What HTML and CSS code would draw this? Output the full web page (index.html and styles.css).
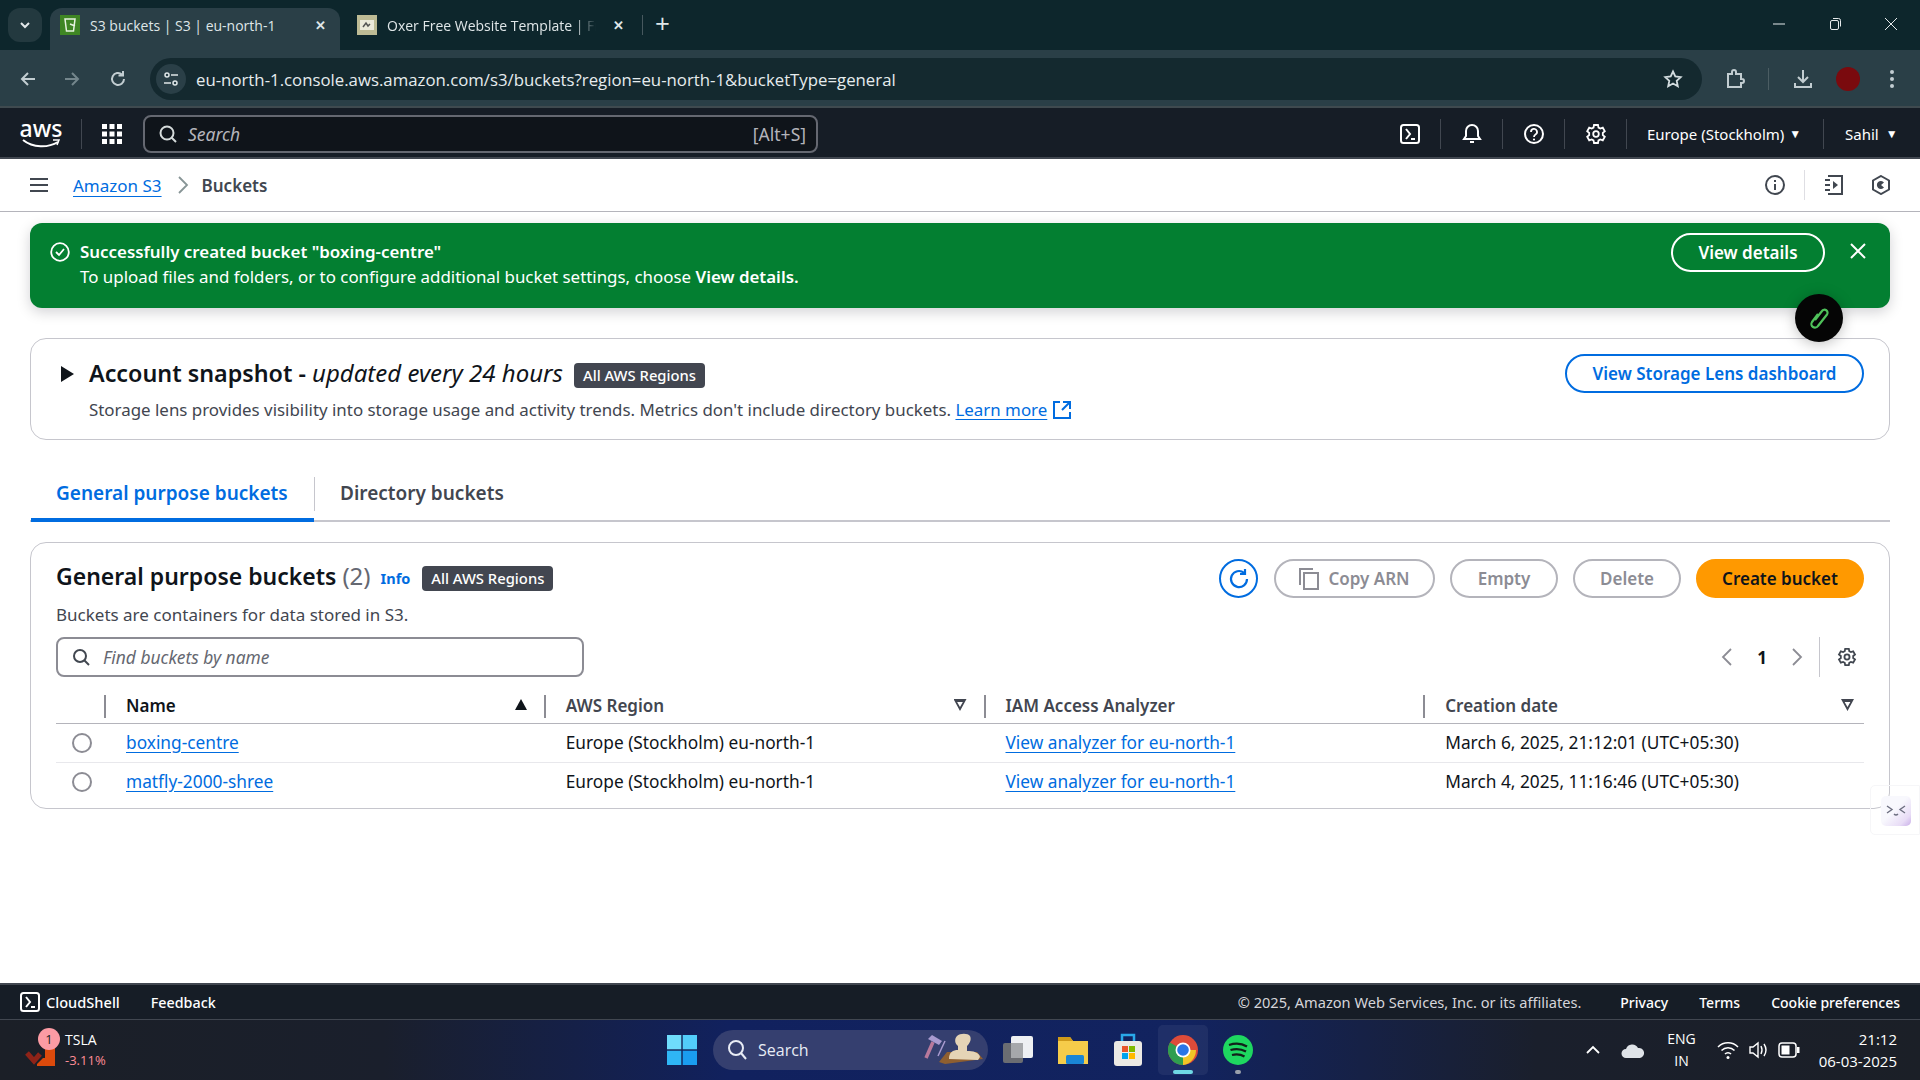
FILE: index.html
```html
<!DOCTYPE html>
<html lang="en">
	<head>
		<meta charset="UTF-8" />
		<title>S3 buckets | S3 | eu-north-1</title>
		<link rel="stylesheet" href="styles.css">
	</head>
	<body>
		<div class="tabstrip">
			<div class="tab-search"><svg width="14" height="14" viewBox="0 0 14 14"><path d="M3 5l4 4 4-4" fill="none" stroke="#e3e8ea" stroke-width="2"/></svg></div>
			<div class="tab active">
				<svg class="favicon" width="20" height="20" viewBox="0 0 20 20"><rect width="20" height="20" fill="#3f8624"/><path d="M5 4h10l-1.500 12h-7zM10 9l5 2" fill="none" stroke="#e6f3df" stroke-width="1.500"/></svg>
				<span class="tab-title">S3 buckets | S3 | eu-north-1</span>
				<span class="tab-close">✕</span>
			</div>
			<div class="tab second">
				<svg class="favicon" width="20" height="20" viewBox="0 0 20 20"><rect width="20" height="20" fill="#bdbb95"/><rect x="3" y="5" width="14" height="10" fill="#eceadb"/><path d="M6 12l3-4 2 3 2-2" fill="none" stroke="#555" stroke-width="1.500"/></svg>
				<span class="tab-title fade">Oxer Free Website Template | Fr</span>
				<span class="tab-close">✕</span>
			</div>
			<div class="tab-sep"></div>
			<span class="tab-new">+</span>
			<div class="window-btns">
				<svg width="14" height="14" viewBox="0 0 14 14"><path d="M1 7h12" stroke="#e6eaec" stroke-width="1"/></svg>
				<svg width="14" height="14" viewBox="0 0 14 14"><rect x="2.500" y="3.500" width="8" height="9" rx="1.500" fill="none" stroke="#e6eaec"/><path d="M5 1.500h5.500q2 0 2 2v6" fill="none" stroke="#e6eaec"/></svg>
				<svg width="14" height="14" viewBox="0 0 14 14"><path d="M1 1l12 12M13 1L1 13" stroke="#e6eaec" stroke-width="1"/></svg>
			</div>
		</div>

		<div class="toolbar">
			<svg class="tool-icon" width="20" height="20" viewBox="0 0 20 20"><path d="M17 10H4M10 4l-6 6 6 6" fill="none" stroke="#c2cdd1" stroke-width="2"/></svg>
			<svg class="tool-icon tool-forward" width="20" height="20" viewBox="0 0 20 20"><path d="M3 10h13M10 4l6 6-6 6" fill="none" stroke="#74868c" stroke-width="2"/></svg>
			<svg class="tool-icon tool-reload" width="20" height="20" viewBox="0 0 20 20"><path d="M16 10a6 6 0 1 1-2-4.500M15 2v4.500h-4.500" fill="none" stroke="#c2cdd1" stroke-width="2"/></svg>
			<div class="addressbar">
				<div class="site-info"><svg width="18" height="18" viewBox="0 0 18 18"><g fill="none" stroke="#dfe6e8" stroke-width="1.500"><circle cx="5" cy="5" r="2"/><path d="M9 5h7M2 13h7"/><circle cx="13" cy="13" r="2"/></g></svg></div>
				<span class="url">eu-north-1.console.aws.amazon.com/s3/buckets?region=eu-north-1&amp;bucketType=general</span>
				<svg class="star" width="20" height="20" viewBox="0 0 20 20"><path d="M10 2.500l2.300 5 5.400.6-4 3.700 1.100 5.400-4.800-2.700-4.800 2.700 1.100-5.400-4-3.700 5.400-.6z" fill="none" stroke="#d3dcdf" stroke-width="1.800"/></svg>
			</div>
			<div class="toolbar-end">
				<svg width="22" height="22" viewBox="0 0 22 22"><path d="M4 6h4V4a2 2 0 0 1 4 0v2h5v5h1a2 2 0 0 1 0 4h-1v4H4z" fill="none" stroke="#c2cdd1" stroke-width="2"/></svg>
				<div class="toolbar-sep"></div>
				<svg width="22" height="22" viewBox="0 0 22 22"><path d="M11 2v12M6 9l5 5 5-5M3 15v4h16v-4" fill="none" stroke="#c2cdd1" stroke-width="2"/></svg>
				<div class="profile-dot"></div>
				<svg width="18" height="22" viewBox="0 0 18 22"><g fill="#c2cdd1"><circle cx="9" cy="4" r="2"/><circle cx="9" cy="11" r="2"/><circle cx="9" cy="18" r="2"/></g></svg>
			</div>
		</div>

		<nav class="awsnav">
			<div class="aws-logo">
				<span class="aws-word">aws</span>
				<svg width="38" height="10" viewBox="0 0 38 10"><path d="M1 1c10 8 25 8 35 2" fill="none" stroke="#fff" stroke-width="2"/><path d="M31 1l6 0-2 5" fill="none" stroke="#fff" stroke-width="1.500"/></svg>
			</div>
			<div class="nav-sep logo-sep"></div>
			<svg class="apps" width="20" height="20" viewBox="0 0 20 20"><g fill="#fff"><rect width="5" height="5"/><rect x="7.500" width="5" height="5"/><rect x="15" width="5" height="5"/><rect y="7.500" width="5" height="5"/><rect x="7.500" y="7.500" width="5" height="5"/><rect x="15" y="7.500" width="5" height="5"/><rect y="15" width="5" height="5"/><rect x="7.500" y="15" width="5" height="5"/><rect x="15" y="15" width="5" height="5"/></g></svg>
			<div class="nav-search">
				<svg width="20" height="20" viewBox="0 0 20 20"><circle cx="9" cy="9" r="6.500" fill="none" stroke="#d5dbdb" stroke-width="2"/><path d="M13.500 13.500L18 18" stroke="#d5dbdb" stroke-width="2"/></svg>
				<span class="nav-search-text">Search</span>
				<span class="nav-search-key">[Alt+S]</span>
			</div>
			<div class="nav-right">
				<div class="nav-item nav-icon"><svg width="20" height="20" viewBox="0 0 20 20"><rect x="1" y="1" width="18" height="18" rx="2.500" fill="none" stroke="#fff" stroke-width="2"/><path d="M6 5l4 5-4 5M11 15h4" fill="none" stroke="#fff" stroke-width="2"/></svg></div>
				<div class="nav-item nav-icon"><svg width="20" height="22" viewBox="0 0 20 22"><path d="M2 16h16l-2-3V8a6 6 0 0 0-12 0v5zM8 19h4" fill="none" stroke="#fff" stroke-width="2"/></svg></div>
				<div class="nav-item nav-icon"><svg width="20" height="20" viewBox="0 0 20 20"><circle cx="10" cy="10" r="9" fill="none" stroke="#fff" stroke-width="2"/><path d="M7 8a3 3 0 1 1 4.500 2.500c-1 .6-1.500 1-1.500 2.500" fill="none" stroke="#fff" stroke-width="1.800"/><circle cx="10" cy="15.500" r="1.100" fill="#fff"/></svg></div>
				<div class="nav-item nav-icon"><svg width="22" height="22" viewBox="0 0 22 22"><path d="M9 2h4l.5 2.600 1.800 1 2.500-.9 2 3.500-2 1.700v2.200l2 1.700-2 3.500-2.500-.9-1.800 1L13 20H9l-.5-2.600-1.800-1-2.500.9-2-3.500 2-1.700V9.900l-2-1.700 2-3.500 2.500.9 1.800-1z" fill="none" stroke="#fff" stroke-width="1.800"/><circle cx="11" cy="11" r="2.800" fill="none" stroke="#fff" stroke-width="1.800"/></svg></div>
				<div class="nav-item nav-region">Europe (Stockholm) <span class="caret">▼</span></div>
				<div class="nav-item nav-user">Sahil <span class="caret">▼</span></div>
			</div>
		</nav>

		<div class="breadcrumbs">
			<svg class="hamburger" width="18" height="16" viewBox="0 0 18 16"><path d="M0 2h18M0 8h18M0 14h18" stroke="#414750" stroke-width="2.200"/></svg>
			<a class="link crumb" href="#">Amazon S3</a>
			<svg class="crumb-chevron" width="12" height="18" viewBox="0 0 12 18"><path d="M2 1l8 8-8 8" fill="none" stroke="#879596" stroke-width="1.800"/></svg>
			<span class="crumb-current">Buckets</span>
			<div class="crumb-tools">
				<svg width="20" height="20" viewBox="0 0 20 20"><circle cx="10" cy="10" r="9" fill="none" stroke="#414750" stroke-width="2"/><path d="M10 9v6M10 5v2" stroke="#414750" stroke-width="2"/></svg>
				<div class="crumb-sep"></div>
				<svg width="20" height="20" viewBox="0 0 20 20"><path d="M4 1h14v18H4M1 5h5M1 10h5M1 15h5" fill="none" stroke="#414750" stroke-width="2"/><path d="M9 6l5 4-5 4z" fill="#414750"/></svg>
				<svg width="20" height="20" viewBox="0 0 20 20"><path d="M10 1l8 4.500v9L10 19l-8-4.500v-9z" fill="none" stroke="#414750" stroke-width="2"/><path d="M13 7.500a4 4 0 1 0 0 5L10 10z" fill="#414750"/></svg>
			</div>
		</div>

		<main class="content">
			<div class="flash">
				<svg class="flash-icon" width="20" height="20" viewBox="0 0 20 20"><circle cx="10" cy="10" r="8.800" fill="none" stroke="#fff" stroke-width="1.800"/><path d="M6 10l3 3 5-6" fill="none" stroke="#fff" stroke-width="1.800"/></svg>
				<div class="flash-text">
					<div class="flash-title">Successfully created bucket "boxing-centre"</div>
					<div>To upload files and folders, or to configure additional bucket settings, choose <b>View details.</b></div>
				</div>
				<button class="btn btn-flash">View details</button>
				<svg class="flash-close" width="16" height="16" viewBox="0 0 16 16"><path d="M1 1l14 14M15 1L1 15" stroke="#fff" stroke-width="2"/></svg>
			</div>

			<section class="snapshot">
				<svg class="snapshot-caret" width="13" height="16" viewBox="0 0 13 16"><path d="M0 0l13 8-13 8z" fill="#0f141a"/></svg>
				<div class="snapshot-body">
					<h2 class="snapshot-title">Account snapshot - <i>updated every 24 hours</i> <span class="badge">All AWS Regions</span></h2>
					<p class="snapshot-desc">Storage lens provides visibility into storage usage and activity trends. Metrics don't include directory buckets. <a class="link" href="#">Learn more</a> <svg class="ext" width="18" height="18" viewBox="0 0 18 18"><path d="M7 1H1v16h16v-6M10 1h7v7M17 1L9 9" fill="none" stroke="#006ce0" stroke-width="2"/></svg></p>
				</div>
				<button class="btn btn-normal">View Storage Lens dashboard</button>
			</section>

			<div class="tabs">
				<div class="tabs-item selected">General purpose buckets</div>
				<div class="tabs-item">Directory buckets</div>
			</div>

			<section class="panel">
				<div class="panel-head">
					<div>
						<h2 class="panel-title">General purpose buckets <span class="count">(2)</span> <a class="info" href="#">Info</a> <span class="badge">All AWS Regions</span></h2>
						<p class="panel-desc">Buckets are containers for data stored in S3.</p>
					</div>
					<div class="panel-actions">
						<button class="btn btn-refresh"><svg width="24" height="24" viewBox="0 0 24 24"><path d="M20 12a8 8 0 1 1-3-6.200M18 2v5h-5" fill="none" stroke="#006ce0" stroke-width="2.200"/></svg></button>
						<button class="btn btn-disabled btn-copy"><svg width="20" height="22" viewBox="0 0 20 22"><path d="M1 17V1h13M5 5h14v16H5z" fill="none" stroke="#8c8c94" stroke-width="2"/></svg>Copy ARN</button>
						<button class="btn btn-disabled btn-empty">Empty</button>
						<button class="btn btn-disabled btn-delete">Delete</button>
						<button class="btn btn-primary">Create bucket</button>
					</div>
				</div>

				<div class="filter-row">
					<div class="filter">
						<svg width="18" height="18" viewBox="0 0 18 18"><circle cx="8" cy="8" r="6" fill="none" stroke="#414750" stroke-width="2"/><path d="M12 12l5 5" stroke="#414750" stroke-width="2"/></svg>
						<span>Find buckets by name</span>
					</div>
					<div class="pager">
						<svg width="12" height="18" viewBox="0 0 12 18"><path d="M10 1L2 9l8 8" fill="none" stroke="#8c8c94" stroke-width="1.800"/></svg>
						<span class="page-num">1</span>
						<svg width="12" height="18" viewBox="0 0 12 18"><path d="M2 1l8 8-8 8" fill="none" stroke="#8c8c94" stroke-width="1.800"/></svg>
					</div>
					<div class="pager-sep"></div>
					<svg class="pager-gear" width="20" height="20" viewBox="0 0 22 22"><path d="M9 2h4l.5 2.600 1.800 1 2.500-.9 2 3.500-2 1.700v2.200l2 1.700-2 3.500-2.500-.9-1.800 1L13 20H9l-.5-2.600-1.800-1-2.500.9-2-3.500 2-1.700V9.900l-2-1.700 2-3.500 2.500.9 1.800-1z" fill="none" stroke="#414750" stroke-width="2"/><circle cx="11" cy="11" r="2.800" fill="none" stroke="#414750" stroke-width="2"/></svg>
				</div>

				<table class="buckets">
					<colgroup>
						<col class="col-select"><col class="col-data"><col class="col-data"><col class="col-data"><col class="col-data">
					</colgroup>
					<thead>
						<tr>
							<th></th>
							<th class="strong">Name<span class="sort sort-on"></span></th>
							<th>AWS Region<span class="sort sort-off"></span></th>
							<th>IAM Access Analyzer</th>
							<th>Creation date<span class="sort sort-off sort-last"></span></th>
						</tr>
					</thead>
					<tbody>
						<tr>
							<td><span class="radio"></span></td>
							<td><a class="link" href="#">boxing-centre</a></td>
							<td>Europe (Stockholm) eu-north-1</td>
							<td><a class="link" href="#">View analyzer for eu-north-1</a></td>
							<td>March 6, 2025, 21:12:01 (UTC+05:30)</td>
						</tr>
						<tr>
							<td><span class="radio"></span></td>
							<td><a class="link" href="#">matfly-2000-shree</a></td>
							<td>Europe (Stockholm) eu-north-1</td>
							<td><a class="link" href="#">View analyzer for eu-north-1</a></td>
							<td>March 4, 2025, 11:16:46 (UTC+05:30)</td>
						</tr>
					</tbody>
				</table>
			</section>

			<div class="ext-orb"><svg width="26" height="30" viewBox="0 0 26 30"><path d="M9 17l7-9a3 3 0 0 1 5 3.500l-9 11.500a3.500 3.500 0 0 1-6-4l6-8" fill="none" stroke="#4fc25a" stroke-width="2.200"/></svg></div>
			<div class="side-card"><div class="side-tab"><svg width="22" height="14" viewBox="0 0 22 14"><path d="M2 2l5 3.500-5 3.500M20 2l-5 3.500 5 3.500" fill="none" stroke="#6d6f80" stroke-width="1.400"/><path d="M9 10q2 2 4 0" fill="none" stroke="#6d6f80" stroke-width="1.400"/></svg></div></div>
		</main>

		<footer class="awsfoot">
			<svg width="20" height="20" viewBox="0 0 20 20"><rect x="1" y="1" width="18" height="18" rx="2.500" fill="none" stroke="#fff" stroke-width="2"/><path d="M6 5l4 5-4 5M11 15h4" fill="none" stroke="#fff" stroke-width="2"/></svg>
			<span class="foot-shell">CloudShell</span>
			<span class="foot-feedback">Feedback</span>
			<span class="foot-copy">© 2025, Amazon Web Services, Inc. or its affiliates.</span>
			<span class="foot-link">Privacy</span>
			<span class="foot-link">Terms</span>
			<span class="foot-link">Cookie preferences</span>
		</footer>

		<div class="taskbar">
			<div class="stock">
				<div class="stock-icon">
					<svg width="32" height="22" viewBox="0 0 32 22"><path d="M2 7l7 8 6-7" fill="none" stroke="#8f2318" stroke-width="5"/><path d="M12 18l6-6h2V2h10v18H12z" fill="#dc4a0c"/></svg>
					<span class="stock-badge">1</span>
				</div>
				<div class="stock-text"><div>TSLA</div><div class="stock-down">-3.11%</div></div>
			</div>
			<div class="task-center">
				<svg class="winlogo" width="30" height="30" viewBox="0 0 30 30"><g fill="#2fb6f5"><rect width="14.300" height="14.300" fill="#6fdcfb"/><rect x="15.700" width="14.300" height="14.300" fill="#52cdfa"/><rect y="15.700" width="14.300" height="14.300" fill="#2fb6f5"/><rect x="15.700" y="15.700" width="14.300" height="14.300" fill="#1a9df0"/></g></svg>
				<div class="task-search">
					<svg width="20" height="22" viewBox="0 0 20 22"><circle cx="9" cy="9" r="7" fill="none" stroke="#e8ecf5" stroke-width="2"/><path d="M14 14l5 6" stroke="#e8ecf5" stroke-width="2"/></svg>
					<span>Search</span>
					<svg class="search-art" width="62" height="36" viewBox="0 0 62 36"><path d="M3 26L10 10" stroke="#b8799c" stroke-width="3.500"/><path d="M5 7l4-4 10 6-3 4z" fill="#a99bd0"/><path d="M15 24l7-15" stroke="#a99bd0" stroke-width="1.500"/><path d="M24 20h30l6 7-38 5-6-2z" fill="#8f5f30"/><path d="M26 27c0-7 4-9 9-9V14c-3-2-4-7-1-10 3-3 11-3 13 0 2 4-1 8-3 10v5c6 0 12 1 13 6l-2 3z" fill="#e5d4b6"/></svg>
				</div>
				<div class="task-app"><svg width="32" height="32" viewBox="0 0 32 32"><rect x="1" y="9" width="20" height="20" rx="2" fill="#6b6d72"/><rect x="9" y="2" width="22" height="22" rx="2" fill="#eef0f3"/><rect x="9" y="9" width="12" height="15" fill="#a6a8ab"/></svg></div>
				<div class="task-app"><svg width="32" height="32" viewBox="0 0 32 32"><path d="M1 3h12l3 4h15v23H1z" fill="#f6cc4a"/><path d="M1 3h12l3 4H1z" fill="#cf9a1a"/><rect x="9" y="21" width="18" height="9" rx="1.500" fill="#1a86d6"/></svg></div>
				<div class="task-app"><svg width="30" height="34" viewBox="0 0 30 34"><rect x="1" y="8" width="28" height="25" rx="3" fill="#eceae4"/><path d="M9 8V2h12v6" fill="none" stroke="#29a9ea" stroke-width="2.500"/><rect x="9" y="13" width="6" height="6" fill="#e8562a"/><rect x="16" y="13" width="6" height="6" fill="#7fba00"/><rect x="9" y="20" width="6" height="6" fill="#00a4ef"/><rect x="16" y="20" width="6" height="6" fill="#ffb900"/></svg></div>
				<div class="task-app task-active">
					<svg width="30" height="30" viewBox="0 0 30 30"><circle cx="15" cy="15" r="15" fill="#dd4b39"/><path d="M15 15L2 7.500A15 15 0 0 0 15 30z" fill="#2f9e4f"/><path d="M15 15l13 0A15 15 0 0 1 15 30z" fill="#f3c526"/><circle cx="15" cy="15" r="7.500" fill="#fff"/><circle cx="15" cy="15" r="5.800" fill="#2a75e6"/></svg>
					<span class="task-pill"></span>
				</div>
				<div class="task-app">
					<svg width="30" height="30" viewBox="0 0 30 30"><circle cx="15" cy="15" r="15" fill="#1ed760"/><path d="M6 10c6-2 13-1.500 18 1.500M7.500 15c5-1.500 11-1 15.500 1.500M9 20c4-1 9-.5 12.500 1.500" fill="none" stroke="#12201a" stroke-width="2.300"/></svg>
					<span class="task-dot"></span>
				</div>
			</div>
			<div class="tray">
				<svg width="16" height="16" viewBox="0 0 16 16"><path d="M2 11l6-6 6 6" fill="none" stroke="#fff" stroke-width="1.800"/></svg>
				<svg class="tray-cloud" width="24" height="18" viewBox="0 0 24 18"><path d="M5 17a4.500 4.500 0 0 1 0-9 6.500 6.500 0 0 1 12-1 5 5 0 0 1 2 10z" fill="#dfe3e8"/></svg>
				<div class="tray-lang"><div>ENG</div><div>IN</div></div>
				<svg class="tray-wifi" width="22" height="20" viewBox="0 0 22 20"><path d="M1 7a14 14 0 0 1 20 0M4.500 10.500a9 9 0 0 1 13 0M8 14a4 4 0 0 1 6 0" fill="none" stroke="#fff" stroke-width="1.500"/><circle cx="11" cy="17.500" r="1.500" fill="#fff"/></svg>
				<svg class="tray-vol" width="22" height="20" viewBox="0 0 22 20"><path d="M2 7h3l5-4v14l-5-4H2zM13 6q2 4 0 8M16 4q4 6 0 12" fill="none" stroke="#fff" stroke-width="1.400"/></svg>
				<svg class="tray-bat" width="22" height="16" viewBox="0 0 22 16"><rect x="1" y="1" width="17" height="14" rx="3" fill="none" stroke="#fff" stroke-width="1.500"/><rect x="3.500" y="3.500" width="8" height="9" fill="#fff"/><rect x="19" y="5" width="2.500" height="6" fill="#fff"/></svg>
				<div class="tray-clock"><div>21:12</div><div>06-03-2025</div></div>
			</div>
		</div>
	</body>
</html>
```

FILE: styles.css
```css
* {
	box-sizing: border-box;
}
html,
body {
	margin: 0;
	height: 100%;
}
body {
	width: 1920px;
	height: 1080px;
	overflow: hidden;
	display: flex;
	flex-direction: column;
	font-family: "Noto Sans", "Open Sans", sans-serif;
	font-size: 17px;
	color: #0f141a;
	background: #fff;
}
h2,
p {
	margin: 0;
}
svg {
	flex: none;
	display: block;
}
.link {
	color: #006ce0;
	text-decoration: underline;
	text-underline-offset: 3px;
}

/* browser tabs */
.tabstrip {
	height: 50px;
	flex: none;
	background: #0d262c;
	display: flex;
	align-items: flex-end;
	color: #dfe6e8;
	font-family: "Open Sans", sans-serif;
	font-size: 14px;
}
.tab-search {
	width: 34px;
	height: 34px;
	margin: 0 8px 8px 8px;
	border-radius: 12px;
	background: #23393f;
	display: flex;
	align-items: center;
	justify-content: center;
}
.tab {
	height: 42px;
	display: flex;
	align-items: center;
	padding-bottom: 8px;
	border-radius: 12px 12px 0 0;
}
.tab.active {
	width: 290px;
	padding-left: 10px;
	padding-right: 10px;
	background: #2a3f47;
}
.tab.second {
	width: 300px;
	padding-left: 17px;
	padding-right: 12px;
}
.tab-title {
	margin-left: 10px;
	flex: 1;
	min-width: 0;
	white-space: nowrap;
}
.tab-title.fade {
	-webkit-mask-image: linear-gradient(to right, #000 90%, transparent 100%);
	mask-image: linear-gradient(to right, #000 90%, transparent 100%);
}
.tab-close {
	width: 20px;
	font-size: 13px;
	text-align: center;
	font-weight: 700;
	margin-left: 12px;
}
.tab-sep {
	width: 1px;
	height: 20px;
	margin: 0 0 15px 2px;
	background: #47585e;
}
.tab-new {
	margin: 0 0 10px 12px;
	font-size: 26px;
	line-height: 34px;
}
.window-btns {
	margin: 0 22px 0 auto;
	height: 50px;
	display: flex;
	align-items: center;
	gap: 42px;
	padding-bottom: 2px;
}

/* browser toolbar */
.toolbar {
	height: 58px;
	flex: none;
	background: #2a3f47;
	display: flex;
	align-items: center;
	padding: 2px 0 0 18px;
	border-bottom: 2px solid #3f4a4f;
}
.tool-icon {
	margin-right: 24px;
}
.tool-forward {
	margin-right: 26px;
}
.tool-reload {
	margin-right: 22px;
}
.addressbar {
	width: 1552px;
	height: 42px;
	border-radius: 21px;
	background: #14292f;
	display: flex;
	align-items: center;
	padding: 0 19px 0 6px;
}
.site-info {
	width: 30px;
	height: 30px;
	border-radius: 50%;
	background: #2a3f47;
	display: flex;
	align-items: center;
	justify-content: center;
}
.url {
	margin-left: 10px;
	font-family: "Open Sans", sans-serif;
	font-size: 16.800px;
	color: #e6ecee;
}
.star {
	margin-left: auto;
}
.toolbar-end {
	display: flex;
	align-items: center;
	margin-left: 22px;
}
.toolbar-sep {
	width: 1px;
	height: 22px;
	margin: 0 23px 0 22px;
	background: #4b5d63;
}
.profile-dot {
	width: 24px;
	height: 24px;
	margin: 0 23px 0 22px;
	border-radius: 50%;
	background: #7a0a0e;
}

/* aws top nav */
.awsnav {
	height: 51px;
	flex: none;
	background: #161d26;
	border-bottom: 2px solid #414750;
	display: flex;
	align-items: center;
	padding: 2px 0 0 21px;
	color: #fff;
	font-size: 15px;
}
.aws-logo {
	width: 40px;
	display: flex;
	flex-direction: column;
	align-items: center;
}
.aws-word {
	font-size: 23px;
	line-height: 18px;
	height: 20px;
	font-weight: 500;
}
.nav-sep {
	width: 1px;
	height: 30px;
	background: #414750;
}
.logo-sep {
	margin: 0 20px;
}
.nav-search {
	width: 675px;
	height: 38px;
	margin-left: 21px;
	border: 2px solid #656871;
	border-radius: 8px;
	background: #0f141a;
	display: flex;
	align-items: center;
	padding: 0 10px 0 13px;
	color: #b4b4bb;
	font-size: 17.500px;
}
.nav-search-text {
	margin-left: 10px;
	font-style: italic;
}
.nav-search-key {
	margin-left: auto;
}
.nav-right {
	margin-left: auto;
	display: flex;
	align-items: stretch;
	height: 30px;
	padding-right: 8px;
}
.nav-item {
	display: flex;
	align-items: center;
	justify-content: center;
}
.nav-icon {
	width: 62px;
	border-right: 1px solid #414750;
}
.nav-region {
	width: 197px;
	border-right: 1px solid #414750;
	gap: 5px;
	justify-content: flex-start;
	padding-left: 20px;
}
.nav-user {
	width: 88px;
	gap: 7px;
	justify-content: flex-start;
	padding-left: 21px;
}
.caret {
	font-size: 12px;
}

/* breadcrumb row */
.breadcrumbs {
	height: 53px;
	flex: none;
	border-bottom: 1px solid #b4b4bb;
	display: flex;
	align-items: center;
	padding: 0 29px 0 30px;
}
.crumb {
	margin-left: 25px;
	text-underline-offset: 4px;
}
.crumb-chevron {
	margin: 0 13px 0 15px;
}
.crumb-current {
	color: #414750;
	font-weight: 600;
}
.crumb-tools {
	margin-left: auto;
	display: flex;
	align-items: center;
}
.crumb-sep {
	width: 1px;
	height: 30px;
	margin: 0 19px;
	background: #dedee3;
}
.crumb-tools svg:last-child {
	margin-left: 27px;
}

/* main area */
.content {
	flex: 1;
	position: relative;
	padding: 11px 30px 0;
}
.flash {
	height: 85px;
	background: #037f31;
	border-radius: 12px;
	box-shadow: 0 4px 14px rgba(0, 7, 22, 0.18);
	display: flex;
	align-items: flex-start;
	padding: 19px 24px 0 20px;
	color: #fff;
}
.flash-icon {
	margin-right: 10px;
}
.flash-text {
	flex: 1;
	line-height: 25px;
	margin-top: -3px;
	font-size: 16.900px;
}
.flash-title {
	font-weight: 600;
}
.flash-text b {
	font-weight: 600;
}
.btn {
	font: inherit;
	font-size: 17px;
	font-weight: 600;
	height: 39px;
	border-radius: 20px;
	background: transparent;
	padding: 0 24px;
	display: flex;
	align-items: center;
	justify-content: center;
}
.btn-flash {
	width: 154px;
	margin: -9px 25px 0 0;
	border: 2px solid #fff;
	color: #fff;
}
.flash-close {
	margin-top: 1px;
}
.snapshot {
	height: 102px;
	margin-top: 30px;
	border: 1px solid #c6c6cd;
	border-radius: 16px;
	display: flex;
	padding: 15px 25px 0 30px;
}
.snapshot-caret {
	margin: 12px 15px 0 0;
}
.snapshot-body {
	flex: 1;
}
.snapshot-title {
	font-size: 23.300px;
	font-weight: 600;
	line-height: 32px;
	margin-top: 3px;
	display: flex;
	align-items: center;
	white-space: pre-wrap;
}
.snapshot-title i {
	font-size: 24px;
	font-weight: 400;
}
.badge {
	display: inline-flex;
	align-items: center;
	height: 25px;
	margin-top: 4px;
	padding: 0 9px;
	border-radius: 4px;
	background: #424650;
	color: #fff;
	font-size: 14.800px;
	font-weight: 500;
	font-style: normal;
	line-height: 25px;
}
.snapshot-title .badge {
	margin-left: 11px;
	margin-top: 5px;
}
.snapshot-desc {
	margin-top: 9px;
	color: #424650;
	line-height: 24px;
	font-size: 16.900px;
	display: flex;
	align-items: center;
	white-space: pre-wrap;
}
.ext {
	margin-left: 6px;
}
.btn-normal {
	width: 299px;
	border: 2px solid #006ce0;
	color: #006ce0;
}
.tabs {
	height: 82px;
	border-bottom: 2px solid #c6c6cd;
	display: flex;
	align-items: flex-end;
	font-size: 19px;
	font-weight: 600;
	color: #424650;
}
.tabs-item {
	height: 45px;
	padding-top: 1px;
	line-height: 30px;
	margin-bottom: -2px;
	padding-left: 25px;
	padding-right: 25px;
}
.tabs-item.selected {
	width: 283px;
	margin-left: 1px;
	color: #006ce0;
	border-bottom: 4px solid #006ce0;
	position: relative;
}
.tabs-item.selected::after {
	content: "";
	position: absolute;
	right: -1px;
	top: 0;
	bottom: 7px;
	width: 1px;
	background: #c6c6cd;
}
.tabs-item:not(.selected) {
	padding-left: 26px;
}
.panel {
	height: 267px;
	margin-top: 20px;
	border: 1px solid #c6c6cd;
	border-radius: 16px;
	padding: 16px 25px 0;
}
.panel-head {
	display: flex;
	justify-content: space-between;
}
.panel-title {
	font-size: 23px;
	font-weight: 600;
	line-height: 34px;
	margin-top: -2px;
	display: flex;
	align-items: center;
	white-space: pre-wrap;
}
.count {
	font-size: 24px;
	font-weight: 400;
	color: #656871;
}
.info {
	margin: 4px 12px 0 10px;
	font-size: 14.500px;
	font-weight: 700;
	color: #006ce0;
	text-decoration: none;
}
.panel-desc {
	margin-top: 8px;
	line-height: 24px;
	color: #424650;
}
.panel-actions {
	display: flex;
	gap: 15px;
}
.btn-refresh {
	width: 39px;
	padding: 0;
	border: 2px solid #006ce0;
	margin-right: 1px;
}
.btn-disabled {
	border: 2px solid #b4b4bb;
	color: #8c8c94;
}
.btn-copy {
	width: 161px;
	gap: 9px;
	padding: 0;
}
.btn-empty,
.btn-delete {
	width: 108px;
	padding: 0;
}
.btn-primary {
	width: 168px;
	padding: 0;
	background: #ff9900;
	border: 2px solid #ff9900;
	color: #0f141a;
}
.filter-row {
	display: flex;
	align-items: center;
	height: 40px;
	margin-top: 10px;
}
.filter {
	width: 528px;
	height: 40px;
	border: 2px solid #8c8c94;
	border-radius: 8px;
	display: flex;
	align-items: center;
	gap: 13px;
	padding: 0 14px;
	color: #656871;
	font-style: italic;
	font-size: 17.400px;
}
.pager {
	margin-left: auto;
	display: flex;
	align-items: center;
	gap: 24px;
}
.page-num {
	font-weight: 700;
	color: #0f141a;
}
.pager-sep {
	width: 1px;
	height: 40px;
	margin: 0 17px 0 16px;
	background: #c6c6cd;
}
.pager-gear {
	margin-right: 7px;
}
.buckets {
	width: 1808px;
	margin-top: 11px;
	table-layout: fixed;
	border-collapse: collapse;
}
.col-select {
	width: 49px;
}
.col-data {
	width: 439.750px;
}
.buckets th {
	height: 35px;
	padding: 0 20px 0 21px;
	text-align: left;
	font-weight: 600;
	color: #424650;
	border-bottom: 1px solid #b4b4bb;
	position: relative;
}
.buckets th.strong {
	color: #0f141a;
}
.buckets th::before {
	content: "";
	position: absolute;
	left: -1px;
	top: 7px;
	height: 23px;
	width: 2px;
	background: #8c8c94;
}
.buckets th:first-child::before {
	display: none;
}
.buckets th:first-child::after {
	content: "";
	position: absolute;
	right: -1px;
	top: 7px;
	height: 23px;
	width: 2px;
	background: #c6c6cd;
}
.sort {
	position: absolute;
	right: 18px;
	top: 11px;
	width: 0;
	height: 0;
}
.sort-on {
	border-left: 6px solid transparent;
	border-right: 6px solid transparent;
	border-bottom: 11px solid #0f141a;
}
.sort-off {
	width: 13px;
	height: 12px;
	right: 18px;
	background: #424650;
	clip-path: polygon(0 0, 100% 0, 50% 100%, 0 0, 28% 24%, 50% 66%, 72% 24%, 28% 24%);
}
.sort-last {
	right: 10px;
}
.buckets td {
	height: 39px;
	padding: 0 20px 0 21px;
	border-bottom: 1px solid #e8e8ec;
	white-space: nowrap;
	line-height: 24px;
	font-size: 17.300px;
}
.buckets tr:last-child td {
	border-bottom: 0;
}
.buckets td:first-child {
	padding: 0 0 0 16px;
}
.radio {
	display: block;
	width: 20px;
	height: 20px;
	border: 2px solid #8c8c94;
	border-radius: 50%;
}
.ext-orb {
	position: absolute;
	left: 1795px;
	top: 82px;
	width: 48px;
	height: 48px;
	border-radius: 50%;
	background: #050505;
	box-shadow: 0 2px 14px rgba(0, 0, 0, 0.25);
	display: flex;
	align-items: center;
	justify-content: center;
}
.side-card {
	position: absolute;
	left: 1870px;
	top: 573px;
	width: 50px;
	height: 50px;
	padding: 10px;
	border: 1px solid #f6f6f8;
	border-radius: 5px 0 0 5px;
}
.side-tab {
	width: 30px;
	height: 30px;
	border-radius: 5px;
	background: linear-gradient(135deg, #f8f8fd 45%, #e8dcf6 80%, #c8aee8 100%);
	display: flex;
	align-items: center;
	justify-content: center;
}

/* aws footer */
.awsfoot {
	height: 37px;
	flex: none;
	background: #161d26;
	border-top: 2px solid #414750;
	border-bottom: 1px solid #414750;
	display: flex;
	align-items: center;
	padding: 0 20px;
	color: #fff;
	font-size: 14px;
}
.foot-shell {
	margin-left: 6px;
	font-size: 14.600px;
	font-weight: 500;
}
.foot-feedback {
	margin-left: 31px;
	font-size: 14.300px;
	font-weight: 500;
}
.foot-copy {
	margin-left: auto;
	color: #d5d5da;
	font-size: 14.600px;
	margin-right: 8px;
}
.foot-link {
	margin-left: 31px;
	font-weight: 500;
}

/* windows taskbar */
.taskbar {
	height: 60px;
	flex: none;
	background: linear-gradient(to right, #1b1f27 0%, #1a1f2c 20%, #11215e 38%, #12235f 62%, #1a1f2c 80%, #1b1f27 100%);
	display: flex;
	align-items: center;
	color: #fff;
	font-family: "Open Sans", sans-serif;
	font-size: 14px;
}
.stock {
	width: 667px;
	display: flex;
	align-items: center;
	padding-left: 25px;
}
.stock-icon {
	position: relative;
	width: 40px;
	height: 36px;
	display: flex;
	align-items: flex-end;
}
.stock-badge {
	position: absolute;
	left: 13px;
	top: -4px;
	width: 22px;
	height: 22px;
	border-radius: 50%;
	background: #fc9ba4;
	color: #1b1f27;
	font-size: 13px;
	line-height: 22px;
	text-align: center;
}
.stock-text {
	line-height: 20px;
	font-size: 14px;
}
.stock-down {
	color: #ff8c95;
	font-size: 13px;
}
.task-center {
	display: flex;
	align-items: center;
}
.winlogo {
	margin-right: 16px;
}
.task-search {
	width: 275px;
	height: 40px;
	margin-right: 5px;
	border-radius: 20px;
	background: #353f6f;
	display: flex;
	align-items: center;
	padding-left: 14px;
	gap: 11px;
	color: #e8ecf5;
	font-size: 16px;
}
.search-art {
	margin-left: auto;
	margin-right: 3px;
}
.task-app {
	position: relative;
	width: 50px;
	height: 50px;
	margin-right: 5px;
	display: flex;
	align-items: center;
	justify-content: center;
}
.task-active {
	background: rgba(255, 255, 255, 0.06);
	border-radius: 5px;
}
.task-pill {
	position: absolute;
	bottom: 1px;
	left: 15px;
	width: 20px;
	height: 4px;
	border-radius: 2px;
	background: #6fd8e4;
}
.task-dot {
	position: absolute;
	bottom: 1px;
	left: 22px;
	width: 6px;
	height: 4px;
	border-radius: 2px;
	background: #9aa0ab;
}
.tray {
	margin-left: auto;
	display: flex;
	align-items: center;
	padding-right: 23px;
}
.tray-cloud {
	margin-left: 20px;
}
.tray-lang {
	margin-left: 22px;
	text-align: center;
	line-height: 22px;
	font-size: 14px;
}
.tray-wifi {
	margin-left: 21px;
}
.tray-vol {
	margin-left: 9px;
}
.tray-bat {
	margin-left: 8px;
}
.tray-clock {
	margin-left: 19px;
	text-align: right;
	line-height: 22px;
	font-size: 15px;
}
```
